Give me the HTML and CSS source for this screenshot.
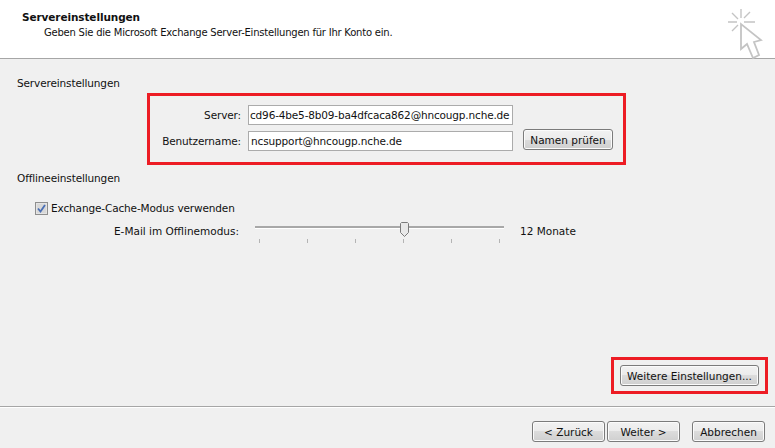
FILE: index.html
```html
<!DOCTYPE html>
<html lang="de">
<head>
<meta charset="utf-8">
<title>Servereinstellungen</title>
<link rel="stylesheet" href="styles.css">
</head>
<body>
<div class="dialog">
  <header class="head">
    <div class="head-text">
      <div class="title">Servereinstellungen</div>
      <div class="subtitle">Geben Sie die Microsoft Exchange Server-Einstellungen für Ihr Konto ein.</div>
    </div>
    <svg class="cursor" width="36" height="56" viewBox="0 0 36 56">
      <g fill="none" stroke="#c4c4c4" stroke-width="1.4">
        <path d="M1 17H10M17 17H28M14 4V13M5 8L11 14M23 7L17 13M5 26L11 20"/>
        <path stroke-width="1.8" d="M14 19V44L20 39L26 53L32 50L27 37L34 35Z" fill="#fff"/>
      </g>
    </svg>
  </header>
  <main class="body">
    <div class="group-label first">Servereinstellungen</div>
    <div class="frame server-frame">
      <div class="form-row">
        <label class="field-label">Server:</label>
        <div class="input">cd96-4be5-8b09-ba4dfcaca862@hncougp.nche.de</div>
      </div>
      <div class="form-row second">
        <label class="field-label">Benutzername:</label>
        <div class="input name-input">ncsupport@hncougp.nche.de</div>
        <button class="btn check">Namen prüfen</button>
      </div>
    </div>
    <div class="group-label offline">Offlineeinstellungen</div>
    <div class="check-row">
      <svg class="checkbox" width="13" height="13" viewBox="0 0 13 13">
        <rect x="0.5" y="0.5" width="12" height="12" fill="#e4e4e4" stroke="#8e8e8e"/>
        <rect x="2" y="2" width="9" height="9" fill="#d8d8d8"/>
        <path d="M3 6.500L5.500 9.500L10 3" fill="none" stroke="#4a6fb5" stroke-width="1.800"/>
      </svg>
      <span>Exchange-Cache-Modus verwenden</span>
    </div>
    <div class="slider-row">
      <div class="slider-label">E-Mail im Offlinemodus:</div>
      <div class="slider">
        <div class="track"></div>
        <div class="ticks"><i></i><i></i><i></i><i></i><i></i><i></i></div>
        <svg class="thumb" width="9" height="15" viewBox="0 0 9 15">
          <path d="M1.500 .5H7.500L8.500 1.500V10.500L4.500 14.500L.5 10.500V1.500Z" fill="#e8e8e8" stroke="#7a7a7a"/>
        </svg>
      </div>
      <div class="slider-value">12 Monate</div>
    </div>
    <div class="spacer"></div>
    <div class="frame more-frame">
      <button class="btn more">Weitere Einstellungen...</button>
    </div>
  </main>
  <footer class="foot">
    <button class="btn nav">&lt; Zurück</button>
    <button class="btn nav next">Weiter &gt;</button>
    <button class="btn nav cancel">Abbrechen</button>
  </footer>
</div>
</body>
</html>
```

FILE: styles.css
```css
* { box-sizing: border-box; }
html, body { margin: 0; padding: 0; }
body { width: 775px; height: 448px; overflow: hidden; font-family: "DejaVu Sans", sans-serif; font-size: 10.5px; letter-spacing: -0.13px; color: #111; }
.dialog { width: 775px; height: 448px; display: flex; flex-direction: column; background: #f0f0f0; }
.head { height: 59px; flex: none; display: flex; justify-content: space-between; background: #fff; border-bottom: 1px solid #a6a6a6; padding: 11px 13px 0 22px; }
.head-text { line-height: 13px; }
.title { font-weight: bold; font-size: 10.5px; letter-spacing: -0.1px; }
.subtitle { margin: 2px 0 0 22px; font-size: 10px; letter-spacing: -0.22px; }
.cursor { margin-top: -6px; margin-right: -1px; }
.body { flex: 1; display: flex; flex-direction: column; padding: 0 7px 0 17px; }
.group-label { line-height: 14px; height: 14px; }
.first { margin-top: 17px; }
.frame { border: 3px solid #ed1c24; flex: none; }
.server-frame { margin: 3px 0 0 130px; width: 479px; height: 72px; padding: 9px 0 0 0; }
.form-row { display: flex; align-items: center; height: 20px; }
.second { margin-top: 6px; }
.field-label { width: 91px; text-align: right; margin-right: 7px; }
.input { width: 265px; height: 20px; line-height: 18px; background: #fff; border: 1px solid #ababab; padding-left: 1px; white-space: nowrap; overflow: hidden; letter-spacing: -0.16px; }
.name-input { padding-left: 2px; letter-spacing: -0.13px; }
.btn { font: inherit; letter-spacing: 0; color: #111; height: 21px; padding: 0; border: 1px solid #7b7b7b; border-radius: 3px; background: linear-gradient(#f2f2f2 0, #ebebeb 50%, #dcdcdc 50%, #cfcfcf 100%); box-shadow: inset 0 0 0 1px #fbfbfb; }
.check { width: 90px; margin-left: 10px; margin-top: -3px; }
.offline { margin-top: 6px; }
.check-row { display: flex; align-items: center; margin: 16px 0 0 18px; height: 14px; gap: 3px; }
.slider-row { display: flex; height: 24px; margin-top: 4px; }
.slider-label { width: 222px; text-align: right; margin-top: 5px; line-height: 14px; letter-spacing: 0; }
.slider { width: 249px; margin-left: 16px; position: relative; }
.track { margin-top: 7px; height: 3px; border-top: 2px solid #a8a8a8; border-bottom: 1px solid #fff; }
.ticks { display: flex; justify-content: space-between; margin: 10px 4px 0; }
.ticks i { width: 1px; height: 4px; background: #b4b4b4; }
.thumb { position: absolute; left: 145px; top: 3px; }
.slider-value { margin: 5px 0 0 16px; line-height: 14px; letter-spacing: 0; }
.spacer { flex: 1; }
.more-frame { margin: 0 0 12px 594px; width: 157px; height: 37px; padding: 5px 0 0 6px; }
.more { width: 139px; display: block; }
.foot { height: 42px; flex: none; border-top: 1px solid #a6a6a6; display: flex; padding: 14px 10px 0 532px; box-shadow: inset 0 1px 0 #fff; }
.nav { width: 73px; }
.next { margin-left: 2px; }
.cancel { margin-left: 12px; }
```
